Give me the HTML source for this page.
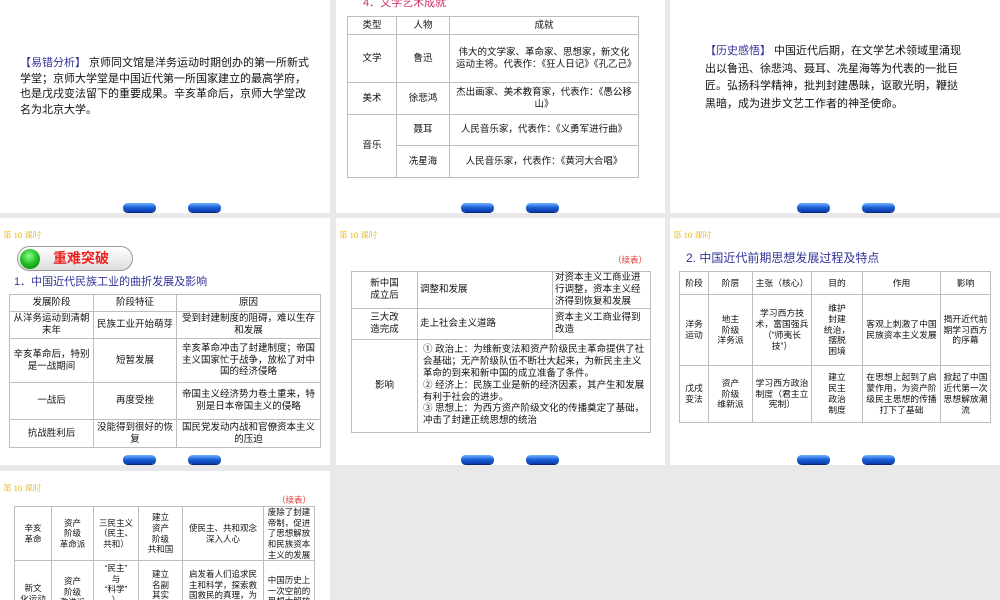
<!DOCTYPE html>
<html><head><meta charset="utf-8"><style>
*{margin:0;padding:0;box-sizing:border-box}
body{width:1000px;height:600px;background:#e9e9e9;position:relative;overflow:hidden;font-family:"Liberation Sans","Noto Sans CJK SC",sans-serif;color:#111}
.s{position:absolute;background:#fff;overflow:hidden}
.a{position:absolute}
.btn{position:absolute;width:33px;height:9px;border-radius:5px;background:linear-gradient(#6fb4ff,#1a5fd8 50%,#0a3aa8);box-shadow:0 1px 0 #0a2a80}
.lk{position:absolute;color:#e8b400;font-size:8.5px;font-family:"Liberation Serif","Noto Serif CJK SC",serif}
table{position:absolute;border-collapse:collapse;table-layout:fixed}
td{border:1px solid #bdbdbd;text-align:center;vertical-align:middle;line-height:1.25;padding:0 2px}
.tl{text-align:left}
.p{font-size:11px;line-height:15.5px}
.b{color:#333399}
.red{color:#d33;position:absolute}
.clip{position:absolute;overflow:hidden}
</style></head><body>

<div class="s" style="left:0;top:0;width:330px;height:213px">
<div class="a p" style="left:20px;top:56px;width:294px"><span class="b">【易错分析】</span> 京师同文馆是洋务运动时期创办的第一所新式学堂；京师大学堂是中国近代第一所国家建立的最高学府，也是戊戌变法留下的重要成果。辛亥革命后，京师大学堂改名为北京大学。</div>
<div class="btn" style="left:123px;top:203px"></div><div class="btn" style="left:188px;top:203px"></div>
</div>

<div class="s" style="left:336px;top:0;width:329px;height:213px">
<div class="a" style="left:27px;top:-6px;font-size:11px;color:#d0306a">4．文学艺术成就</div>
<table style="left:11px;top:16px;width:292px;font-size:9.5px">
<colgroup><col style="width:49px"><col style="width:53px"><col></colgroup>
<tr style="height:18px"><td>类型</td><td>人物</td><td>成就</td></tr>
<tr style="height:48px"><td>文学</td><td>鲁迅</td><td style="padding:0 6px">伟大的文学家、革命家、思想家，新文化运动主将。代表作：《狂人日记》《孔乙己》</td></tr>
<tr style="height:32px"><td>美术</td><td>徐悲鸿</td><td style="padding:0 6px">杰出画家、美术教育家，代表作：《愚公移山》</td></tr>
<tr style="height:31px"><td rowspan="2">音乐</td><td>聂耳</td><td>人民音乐家，代表作：《义勇军进行曲》</td></tr>
<tr style="height:32px"><td>冼星海</td><td>人民音乐家，代表作：《黄河大合唱》</td></tr>
</table>
<div class="btn" style="left:125px;top:203px"></div><div class="btn" style="left:190px;top:203px"></div>
</div>

<div class="s" style="left:670px;top:0;width:330px;height:213px">
<div class="a" style="left:35px;top:43px;width:262px;font-size:11px;line-height:17.5px"><span class="b">【历史感悟】</span> 中国近代后期，在文学艺术领域里涌现出以鲁迅、徐悲鸿、聂耳、冼星海等为代表的一批巨匠。弘扬科学精神，批判封建愚昧，讴歌光明，鞭挞黑暗，成为进步文艺工作者的神圣使命。</div>
<div class="btn" style="left:127px;top:203px"></div><div class="btn" style="left:192px;top:203px"></div>
</div>

<div class="s" style="left:0;top:218px;width:330px;height:247px">
<div class="lk" style="left:3px;top:11px">第 10 课时</div>
<div class="a" style="left:17px;top:28px;width:116px;height:25px;border-radius:13px;border:1px solid #999;background:linear-gradient(#fff,#ddd)"></div>
<div class="a" style="left:20px;top:31px;width:20px;height:20px;border-radius:50%;background:radial-gradient(circle at 45% 35%,#8f8,#2b2 50%,#070);"></div>
<div class="a" style="left:53px;top:30px;font-size:14px;font-weight:bold;color:#e22">重难突破</div>
<div class="a b" style="left:14px;top:55px;font-size:11px">1．中国近代民族工业的曲折发展及影响</div>
<table style="left:9px;top:76px;width:312px;font-size:9.5px">
<colgroup><col style="width:84px"><col style="width:83px"><col></colgroup>
<tr style="height:17px"><td>发展阶段</td><td>阶段特征</td><td>原因</td></tr>
<tr style="height:27px"><td>从洋务运动到清朝末年</td><td>民族工业开始萌芽</td><td>受到封建制度的阻碍，难以生存和发展</td></tr>
<tr style="height:44px"><td>辛亥革命后，特别是一战期间</td><td>短暂发展</td><td>辛亥革命冲击了封建制度；帝国主义国家忙于战争，放松了对中国的经济侵略</td></tr>
<tr style="height:37px"><td>一战后</td><td>再度受挫</td><td>帝国主义经济势力卷土重来，特别是日本帝国主义的侵略</td></tr>
<tr style="height:28px"><td>抗战胜利后</td><td>没能得到很好的恢复</td><td>国民党发动内战和官僚资本主义的压迫</td></tr>
</table>
<div class="btn" style="left:123px;top:237px"></div><div class="btn" style="left:188px;top:237px"></div>
</div>

<div class="s" style="left:336px;top:218px;width:329px;height:247px">
<div class="lk" style="left:3px;top:11px">第 10 课时</div>
<div class="red" style="left:277px;top:36px;font-size:8.5px">（续表）</div>
<table style="left:15px;top:53px;width:300px;font-size:9.5px">
<colgroup><col style="width:66px"><col style="width:135px"><col></colgroup>
<tr style="height:36px"><td style="padding:0 14px">新中国成立后</td><td class="tl">调整和发展</td><td class="tl">对资本主义工商业进行调整，资本主义经济得到恢复和发展</td></tr>
<tr style="height:31px"><td style="padding:0 14px">三大改造完成</td><td class="tl">走上社会主义道路</td><td class="tl">资本主义工商业得到改造</td></tr>
<tr style="height:93px"><td>影响</td><td colspan="2" class="tl" style="padding-left:5px">① 政治上：为维新变法和资产阶级民主革命提供了社会基础；无产阶级队伍不断壮大起来，为新民主主义革命的到来和新中国的成立准备了条件。<br>② 经济上：民族工业是新的经济因素，其产生和发展有利于社会的进步。<br>③ 思想上：为西方资产阶级文化的传播奠定了基础，冲击了封建正统思想的统治</td></tr>
</table>
<div class="btn" style="left:125px;top:237px"></div><div class="btn" style="left:190px;top:237px"></div>
</div>

<div class="s" style="left:670px;top:218px;width:330px;height:247px">
<div class="lk" style="left:3px;top:11px">第 10 课时</div>
<div class="a b" style="left:16px;top:31px;font-size:12px">2. 中国近代前期思想发展过程及特点</div>
<table style="left:9px;top:53px;width:312px;font-size:8.8px">
<colgroup><col style="width:29px"><col style="width:44px"><col style="width:59px"><col style="width:51px"><col style="width:78px"><col></colgroup>
<tr style="height:23px"><td>阶段</td><td>阶层</td><td>主张（核心）</td><td>目的</td><td>作用</td><td>影响</td></tr>
<tr style="height:71px"><td>洋务运动</td><td>地主<br>阶级<br>洋务派</td><td>学习西方技术，富国强兵（“师夷长技”）</td><td>维护<br>封建<br>统治，<br>摆脱<br>困境</td><td>客观上刺激了中国民族资本主义发展</td><td>揭开近代前期学习西方的序幕</td></tr>
<tr style="height:57px"><td>戊戌变法</td><td>资产<br>阶级<br>维新派</td><td>学习西方政治制度（君主立宪制）</td><td>建立<br>民主<br>政治<br>制度</td><td>在思想上起到了启蒙作用，为资产阶级民主思想的传播打下了基础</td><td>掀起了中国近代第一次思想解放潮流</td></tr>
</table>
<div class="btn" style="left:127px;top:237px"></div><div class="btn" style="left:192px;top:237px"></div>
</div>

<div class="s" style="left:0;top:471px;width:330px;height:129px">
<div class="lk" style="left:3px;top:11px">第 10 课时</div>
<div class="red" style="left:277px;top:23px;font-size:8.5px">（续表）</div>
<div class="clip" style="left:14px;top:35px;width:302px;height:94px">
<table style="left:0;top:0;width:301px;font-size:8.5px">
<colgroup><col style="width:37px"><col style="width:42px"><col style="width:45px"><col style="width:44px"><col style="width:81px"><col></colgroup>
<tr style="height:52px"><td>辛亥<br>革命</td><td>资产<br>阶级<br>革命派</td><td>三民主义（民主、共和）</td><td>建立<br>资产<br>阶级<br>共和国</td><td>使民主、共和观念深入人心</td><td>废除了封建帝制，促进了思想解放和民族资本主义的发展</td></tr>
<tr style="height:70px"><td style="vertical-align:top;padding-top:22px">新文<br>化运动</td><td style="vertical-align:top;padding-top:15px">资产<br>阶级<br>激进派</td><td style="vertical-align:top;padding-top:2px">“民主”<br>与<br>“科学”<br>）</td><td style="vertical-align:top;padding-top:8px">建立<br>名副<br>其实<br>的共</td><td style="vertical-align:top;padding-top:8px">启发着人们追求民主和科学，探索救国救民的真理，为马克思主义在中国的传播创</td><td style="vertical-align:top;padding-top:14px">中国历史上一次空前的思想大解放</td></tr>
</table>
</div>
</div>

</body></html>
